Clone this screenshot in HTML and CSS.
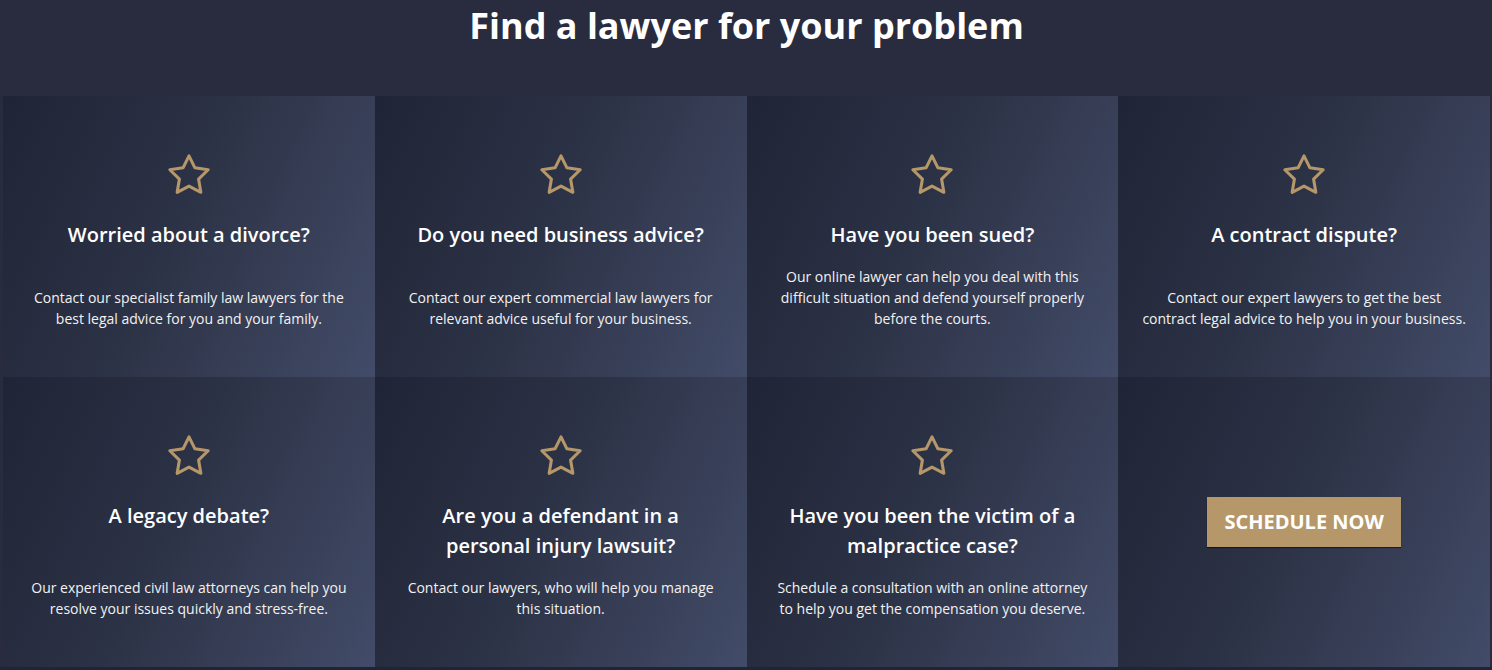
FILE: index.html
```html
<!DOCTYPE html>
<html lang="en">
<head>
<meta charset="utf-8">
<title>Find a lawyer for your problem</title>
<link rel="stylesheet" href="styles.css">
</head>
<body>
<section class="problems">
  <h1 class="problems-title">Find a lawyer for your problem</h1>
  <div class="grid">
    <div class="card">
      <div class="card-head">
        <svg class="star" viewBox="0 0 24 24"><polygon points="12,2 15.09,8.26 22,9.27 17,14.14 18.18,21.02 12,17.77 5.82,21.02 7,14.14 2,9.27 8.91,8.26"/></svg>
        <h2 class="card-title">Worried about a divorce?</h2>
      </div>
      <p class="card-text">Contact our specialist family law lawyers for the best legal advice for you and your family.</p>
    </div>
    <div class="card">
      <div class="card-head">
        <svg class="star" viewBox="0 0 24 24"><polygon points="12,2 15.09,8.26 22,9.27 17,14.14 18.18,21.02 12,17.77 5.82,21.02 7,14.14 2,9.27 8.91,8.26"/></svg>
        <h2 class="card-title">Do you need business advice?</h2>
      </div>
      <p class="card-text">Contact our expert commercial law lawyers for relevant advice useful for your business.</p>
    </div>
    <div class="card">
      <div class="card-head">
        <svg class="star" viewBox="0 0 24 24"><polygon points="12,2 15.09,8.26 22,9.27 17,14.14 18.18,21.02 12,17.77 5.82,21.02 7,14.14 2,9.27 8.91,8.26"/></svg>
        <h2 class="card-title">Have you been sued?</h2>
      </div>
      <p class="card-text">Our online lawyer can help you deal with this difficult situation and defend yourself properly before the courts.</p>
    </div>
    <div class="card">
      <div class="card-head">
        <svg class="star" viewBox="0 0 24 24"><polygon points="12,2 15.09,8.26 22,9.27 17,14.14 18.18,21.02 12,17.77 5.82,21.02 7,14.14 2,9.27 8.91,8.26"/></svg>
        <h2 class="card-title">A contract dispute?</h2>
      </div>
      <p class="card-text">Contact our expert lawyers to get the best contract legal advice to help you in your business.</p>
    </div>
    <div class="card">
      <div class="card-head">
        <svg class="star" viewBox="0 0 24 24"><polygon points="12,2 15.09,8.26 22,9.27 17,14.14 18.18,21.02 12,17.77 5.82,21.02 7,14.14 2,9.27 8.91,8.26"/></svg>
        <h2 class="card-title">A legacy debate?</h2>
      </div>
      <p class="card-text">Our experienced civil law attorneys can help you resolve your issues quickly and stress-free.</p>
    </div>
    <div class="card">
      <div class="card-head">
        <svg class="star" viewBox="0 0 24 24"><polygon points="12,2 15.09,8.26 22,9.27 17,14.14 18.18,21.02 12,17.77 5.82,21.02 7,14.14 2,9.27 8.91,8.26"/></svg>
        <h2 class="card-title">Are you a defendant in a personal injury lawsuit?</h2>
      </div>
      <p class="card-text">Contact our lawyers, who will help you manage this situation.</p>
    </div>
    <div class="card">
      <div class="card-head">
        <svg class="star" viewBox="0 0 24 24"><polygon points="12,2 15.09,8.26 22,9.27 17,14.14 18.18,21.02 12,17.77 5.82,21.02 7,14.14 2,9.27 8.91,8.26"/></svg>
        <h2 class="card-title">Have you been the victim of a malpractice case?</h2>
      </div>
      <p class="card-text">Schedule a consultation with an online attorney to help you get the compensation you deserve.</p>
    </div>
    <div class="card card-cta">
      <a class="btn" href="#">SCHEDULE NOW</a>
    </div>
  </div>
</section>
</body>
</html>
```
FILE: styles.css
```css
* { box-sizing: border-box; }
html, body {
  margin: 0;
  padding: 0;
  background: #212434;
  font-family: "Open Sans", "Liberation Sans", sans-serif;
  color: #fff;
}
.problems {
  background: #292c3e;
  padding: 0 2px 0 3px;
}
.problems-title {
  margin: 0;
  height: 96px;
  font-size: 36px;
  line-height: 52px;
  font-weight: 700;
  text-align: center;
  color: #fff;
}
.grid {
  display: grid;
  grid-template-columns: repeat(4, 1fr);
}
.card {
  display: flex;
  flex-direction: column;
  align-items: center;
  text-align: center;
  padding: 58px 24px 48px;
  background: linear-gradient(115deg, #1f2436 0%, #2c3245 45%, #424b68 100%);
}
.card-head {
  display: flex;
  flex-direction: column;
  align-items: center;
}
.star {
  width: 46px;
  height: 46px;
  margin-top: -2px;
  margin-bottom: -2px;
  fill: none;
  stroke: #b5976a;
  stroke-width: 1.6;
  stroke-linejoin: round;
}
.card-title {
  margin: 24px 0 0;
  font-size: 20px;
  line-height: 30px;
  font-weight: 600;
  color: #fff;
  max-width: 300px;
}
.card-text {
  margin: auto 0 0;
  padding-top: 16px;
  font-size: 14px;
  line-height: 21px;
  color: #f2f2f2;
  max-width: 340px;
}
.card-cta {
  justify-content: center;
  padding: 0;
}
.btn {
  display: inline-block;
  background: #b5976a;
  color: #fff;
  text-decoration: none;
  font-size: 20px;
  font-weight: 700;
  line-height: 50px;
  height: 50px;
  padding: 0 17px;
  box-shadow: 0 1px 1px rgba(0,0,0,0.5);
}
```
